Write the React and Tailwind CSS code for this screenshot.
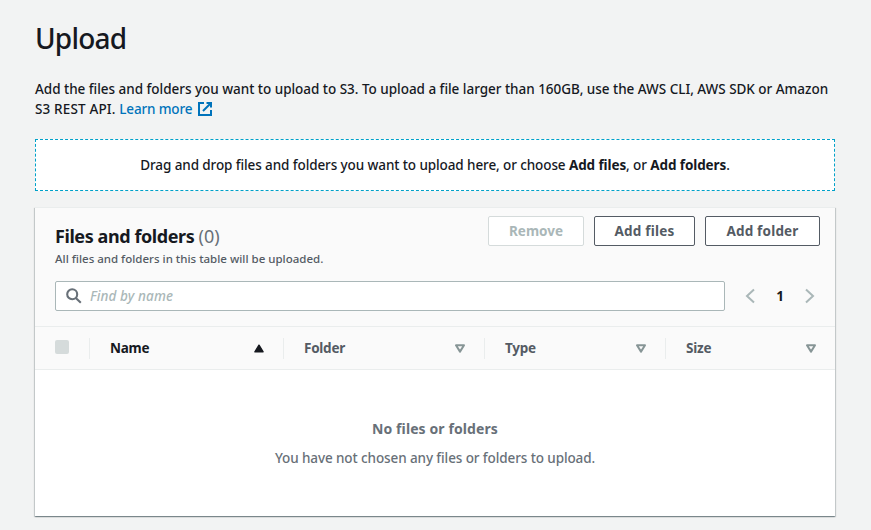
import React from "react";

function ExternalIcon() {
  return (
    <svg className="ml-[5px] inline-block h-4 w-4 align-[-3px]" viewBox="0 0 16 16" fill="none" stroke="#0073bb" strokeWidth="2">
      <path d="M7 2H2v12h12V9" />
      <path d="M9.5 2H14v4.5M14 2L6 10" />
    </svg>
  );
}

function SearchIcon() {
  return (
    <svg className="h-4 w-4 shrink-0" viewBox="0 0 16 16" fill="none" stroke="#687078" strokeWidth="2.1">
      <circle cx="6.2" cy="6.2" r="5" />
      <path d="M9.8 9.9L14.8 14.7" />
    </svg>
  );
}

function SortDown() {
  return (
    <svg className="h-[9px] w-[10px]" viewBox="0 0 10 9" fill="none" stroke="#879596" strokeWidth="2" strokeLinejoin="round">
      <path d="M1 1.3h8L5 7.6z" />
    </svg>
  );
}

function SortUp() {
  return (
    <svg className="h-[9px] w-[10px]" viewBox="0 0 10 9" fill="#16191f" stroke="#16191f" strokeWidth="1.4" strokeLinejoin="round">
      <path d="M0.9 7.8h8.2L5 1.2z" />
    </svg>
  );
}

function Chevron({ d }) {
  return (
    <svg className="h-4 w-[10px]" viewBox="0 0 10 16" fill="none" stroke="#aab7b8" strokeWidth="2">
      <path d={d} />
    </svg>
  );
}

function Column({ label, width, sorted }) {
  return (
    <div className={`flex h-[21px] items-center justify-between border-l border-[#eaeded] pl-5 ${width} ${sorted ? "text-[#16191f]" : "text-[#545b64]"}`}>
      <span className="text-[13.5px] font-bold tracking-[-0.25px]">{label}</span>
      {sorted ? <SortUp /> : <SortDown />}
    </div>
  );
}

export default function App() {
  return (
    <div className="h-[530px] overflow-hidden bg-[#f2f3f3] pr-9 pl-[35px] font-['Noto_Sans',sans-serif] text-[13.5px] leading-5 text-[#16191f]">
      <h1 className="pt-5 text-[28px] leading-9 font-medium tracking-[-0.8px]">Upload</h1>
      <p className="mt-[23px] font-medium tracking-[-0.025px] whitespace-nowrap">
        Add the files and folders you want to upload to S3. To upload a file larger than 160GB, use the AWS CLI, AWS SDK or Amazon
        <br />
        <span className="tracking-[0.15px]">S3 REST API. </span>
        <a className="tracking-[-0.15px] text-[#0073bb]">Learn more<ExternalIcon /></a>
      </p>
      <div className="mt-5 flex h-[52px] items-center justify-center border border-dashed border-[#00a1c9] bg-white">
        <p className="font-medium tracking-[-0.1px]">
          Drag and drop files and folders you want to upload here, or choose <b>Add files</b>, or <b>Add folders</b>.
        </p>
      </div>
      <section className="mt-4 h-[309px] bg-white shadow-[0_1px_1px_0_rgba(0,28,36,0.3),1px_1px_1px_0_rgba(0,28,36,0.15),-1px_1px_1px_0_rgba(0,28,36,0.15)]">
        <div className="h-[120px] border-t border-b border-[#eaeded] bg-[#fafafa] pr-[15px] pl-5">
          <div className="flex justify-between">
            <div className="pt-[17px]">
              <h2 className="text-[18px] leading-[22px] font-bold tracking-[-0.42px]">
                Files and folders <span className="font-normal tracking-normal text-[#687078]">(0)</span>
              </h2>
              <p className="mt-1 text-[11.5px] leading-4 font-medium text-[#545b64]">All files and folders in this table will be uploaded.</p>
            </div>
            <div className="flex gap-2.5 pt-2 text-[13.5px] font-bold tracking-[0.2px] text-[#545b64]">
              <button className="h-[30px] w-24 rounded-[2px] border border-[#d5dbdb] bg-white tracking-normal text-[#aab7b8]">Remove</button>
              <button className="h-[30px] w-[101px] rounded-[2px] border border-[#545b64] bg-white">Add files</button>
              <button className="h-[30px] w-[115px] rounded-[2px] border border-[#545b64] bg-white">Add folder</button>
            </div>
          </div>
          <div className="mt-[14px] flex items-center">
            <div className="flex h-[30px] w-[670px] items-center gap-2 rounded-[2px] border border-[#aab7b8] bg-white pl-2.5">
              <SearchIcon />
              <span className="font-medium tracking-[0.1px] text-[#aab7b8] italic">Find by name</span>
            </div>
            <div className="ml-5 flex w-[70px] items-center justify-between">
              <Chevron d="M9 1.5L2 8l7 6.5" />
              <b>1</b>
              <Chevron d="M1 1.5L8 8l-7 6.5" />
            </div>
          </div>
        </div>
        <div className="flex h-[43px] items-center border-b border-[#eaeded] bg-[#fafafa] pl-5">
          <div className="mr-5 mb-0.5 h-[14px] w-[14px] rounded-[2px] bg-[#d5dbdb]" />
          <Column label="Name" width="w-[194px] pr-[19px]" sorted />
          <Column label="Folder" width="w-[201px] pr-[19px]" />
          <Column label="Type" width="w-[181px] pr-[19px]" />
          <Column label="Size" width="w-[169px] pr-[18px]" />
        </div>
        <div className="flex flex-col items-center pt-[49px] text-[#687078]">
          <b className="text-[14px] tracking-[0.1px]">No files or folders</b>
          <p className="mt-[9px] font-medium tracking-[-0.1px]">You have not chosen any files or folders to upload.</p>
        </div>
      </section>
    </div>
  );
}
